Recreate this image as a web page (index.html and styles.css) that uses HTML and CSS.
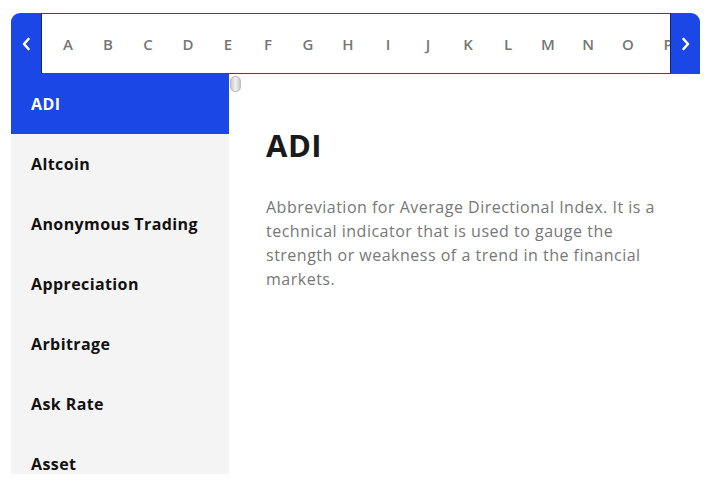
FILE: index.html
```html
<!DOCTYPE html>
<html lang="en">

<head>
    <meta charset="UTF-8">
    <meta name="viewport" content="width=device-width, initial-scale=1.0">
    <title>Glossary</title>
    <link rel="stylesheet" href="styles.css">
</head>

<body>
    <div class="glossary">
        <div class="alpha-bar">
            <button class="nav-btn prev" type="button">
                <svg width="10" height="14" viewBox="0 0 10 14"><path d="M7.5 2 L3 7 L7.5 12" fill="none" stroke="#fff" stroke-width="2.6" stroke-linecap="round" stroke-linejoin="round"/></svg>
            </button>
            <div class="letters">
                <span>A</span><span>B</span><span>C</span><span>D</span><span>E</span>
                <span>F</span><span>G</span><span>H</span><span>I</span><span>J</span>
                <span>K</span><span>L</span><span>M</span><span>N</span><span>O</span>
                <span>P</span>
            </div>
            <button class="nav-btn next" type="button">
                <svg width="10" height="14" viewBox="0 0 10 14"><path d="M2.5 2 L7 7 L2.5 12" fill="none" stroke="#fff" stroke-width="2.6" stroke-linecap="round" stroke-linejoin="round"/></svg>
            </button>
        </div>

        <div class="glossary-body">
            <ul class="terms">
                <li class="term active">ADI</li>
                <li class="term">Altcoin</li>
                <li class="term">Anonymous Trading</li>
                <li class="term">Appreciation</li>
                <li class="term">Arbitrage</li>
                <li class="term">Ask Rate</li>
                <li class="term">Asset</li>
            </ul>
            <span class="scroll-thumb"></span>

            <div class="definition">
                <h2>ADI</h2>
                <p>Abbreviation for Average Directional Index. It is a technical indicator that is used to gauge the strength or weakness of a trend in the financial markets.</p>
            </div>
        </div>
    </div>
</body>

</html>
```

FILE: styles.css
```css
body {
    font-family: "Open Sans", Arial, sans-serif;
    background-color: #fff;
    margin: 0;
    padding: 13px 11px;
}

.glossary {
    width: 689px;
}

.alpha-bar {
    display: flex;
    height: 61px;
}

.nav-btn {
    width: 30px;
    border: none;
    padding: 0;
    background: #1a47e6;
    display: flex;
    align-items: center;
    justify-content: center;
    cursor: pointer;
}

.nav-btn.prev {
    border-radius: 9px 0 0 0;
}

.nav-btn.next {
    border-radius: 0 9px 0 0;
    border-left: 1px solid #13236e;
}

.letters {
    flex: 1;
    display: flex;
    align-items: center;
    overflow: hidden;
    border-top: 1px solid #2446b8;
    border-bottom: 1px solid #2446b8;
    border-left: 1px solid #13236e;
    padding-left: 6px;
    background: #fff;
}

.letters span {
    flex: none;
    width: 40px;
    text-align: center;
    color: #767676;
    font-size: 15px;
    font-weight: 600;
}

.glossary-body {
    position: relative;
    display: flex;
}

.terms {
    list-style: none;
    margin: 0;
    padding: 0;
    width: 218px;
    height: 400px;
    overflow: hidden;
    flex: none;
    background: #f4f4f4;
}

.term {
    height: 60px;
    display: flex;
    align-items: center;
    padding-left: 20px;
    font-size: 16px;
    font-weight: 700;
    letter-spacing: 0.4px;
    color: #111;
}

.term.active {
    background: #1a47e6;
    color: #fff;
}

.scroll-thumb {
    position: absolute;
    left: 219px;
    top: 2px;
    width: 9px;
    height: 14px;
    border-radius: 5px;
    background: linear-gradient(to right, #c8c8c8, #f0f0f0 50%, #c8c8c8);
    border: 1px solid #bbb;
}

.definition {
    padding: 50px 30px 0 37px;
}

.definition h2 {
    margin: 0 0 29px;
    font-size: 31px;
    font-weight: 700;
    letter-spacing: 0.5px;
    color: #1a1a1a;
}

.definition p {
    margin: 0;
    font-size: 16px;
    line-height: 24px;
    letter-spacing: 0.5px;
    color: #777;
}
```
